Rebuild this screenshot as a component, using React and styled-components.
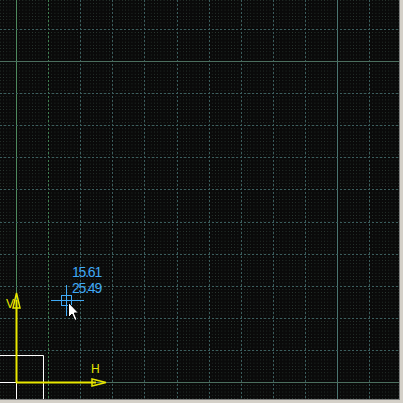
import React from 'react'
import styled, { createGlobalStyle } from 'styled-components'

const STEP = 32.1
const ORIGIN_X = 16
const ORIGIN_Y = 382

const GlobalStyle = createGlobalStyle`
    html, body {
        margin: 0;
        padding: 0;
        background: #000;
    }
    body {
        font-family: "Liberation Sans", Arial, sans-serif;
    }
`

const Window = styled.div`
    width: 404px;
    height: 404px;
    display: flex;
    box-sizing: border-box;
    background: #d4d0c8;
    border-right: 1px solid #ffffff;
    border-bottom: 1px solid #ffffff;
    padding: 0 3px 3px 0;
`

const Viewport = styled.div`
    flex: 1;
    display: flex;
    background: #0b0b0b;
    border-right: 1px solid #808080;
    border-bottom: 1px solid #808080;
    overflow: hidden;
`

const Canvas = styled.svg`
    display: block;
    width: 400px;
    height: 400px;
    flex-shrink: 0;
`

const Readout = styled.text`
    font-family: "Liberation Sans", Arial, sans-serif;
    font-size: 14px;
    letter-spacing: -1.2px;
    fill: #3fa9f5;
`

const AxisLabel = styled.text`
    font-family: "Liberation Sans", Arial, sans-serif;
    font-size: 12px;
    fill: #e8e800;
`

const crisp = v => Math.round(v) + 0.5

const gridLines = () => {
    const lines = []
    for (let k = 0; k <= 12; k++) {
        const x = crisp(ORIGIN_X + k * STEP)
        const solid = k % 10 === 0
        lines.push(
            <line key={'v' + k} x1={x} y1={0} x2={x} y2={400}
                stroke={solid ? (k === 0 ? '#4e8a5e' : '#4a7470') : (k === 1 ? '#3f8050' : '#3b5e5e')}
                strokeWidth={1}
                strokeDasharray={solid ? null : '2 2'} />
        )
    }
    for (let k = 0; k <= 12; k++) {
        const y = crisp(ORIGIN_Y - k * STEP)
        const solid = k % 10 === 0
        lines.push(
            <line key={'h' + k} x1={0} y1={y} x2={400} y2={y}
                stroke={solid ? '#4b6e5e' : '#3b5e5e'}
                strokeWidth={1}
                strokeDasharray={solid ? null : '2 2'} />
        )
    }
    return lines
}

const Pointer = ({ x, y }) => (
    <path
        transform={`translate(${x} ${y})`}
        d="M0.5 0.5 L0.5 15.5 L4 12 L6.8 18.5 L9 17.5 L6.3 11 L10.5 11 Z"
        fill="#ffffff"
        stroke="#000000"
        strokeWidth="1"
    />
)

export default function App() {
    return (
        <>
            <GlobalStyle />
            <Window>
                <Viewport>
                    <Canvas viewBox="0 0 400 400">
                        <defs>
                            <pattern id="dots" patternUnits="userSpaceOnUse"
                                x={ORIGIN_X} y={ORIGIN_Y} width={STEP / 10} height={STEP / 10}>
                                <rect x="0" y="0" width="1" height="1" fill="#2e3e36" shapeRendering="crispEdges" />
                            </pattern>
                        </defs>
                        <rect x="0" y="0" width="400" height="400" fill="#0a0a0a" />
                        <rect x="0" y="0" width="400" height="400" fill="url(#dots)" />

                        {gridLines()}

                        {/* reference box at origin */}
                        <g stroke="#ffffff" strokeWidth="1" fill="none">
                            <polyline points="0,355.5 43.5,355.5 43.5,400" />
                            <line x1="0" y1="382.5" x2="16" y2="382.5" />
                            <line x1="16.5" y1="382" x2="16.5" y2="400" />
                        </g>

                        {/* UCS axes */}
                        <g stroke="#e8e800" fill="none">
                            <line x1="16.5" y1="300" x2="16.5" y2="383" strokeWidth="2" />
                            <line x1="16" y1="382.5" x2="96" y2="382.5" strokeWidth="2" />
                            <polygon points="16.5,293 13,308 20,308" strokeWidth="1.5" />
                            <polygon points="106,382.5 92,379 92,386" strokeWidth="1.5" />
                        </g>
                        <AxisLabel x="6" y="308">V</AxisLabel>
                        <AxisLabel x="91" y="373">H</AxisLabel>

                        {/* cursor */}
                        <g stroke="#3fa9f5" strokeWidth="1" fill="none">
                            <line x1="51" y1="300.5" x2="84" y2="300.5" />
                            <line x1="66.5" y1="285" x2="66.5" y2="316" />
                            <rect x="61.5" y="295.5" width="10" height="10" />
                        </g>
                        <Readout x="72" y="277">15.61</Readout>
                        <Readout x="72" y="293">25.49</Readout>
                        <Pointer x={68} y={302} />
                    </Canvas>
                </Viewport>
            </Window>
        </>
    )
}
